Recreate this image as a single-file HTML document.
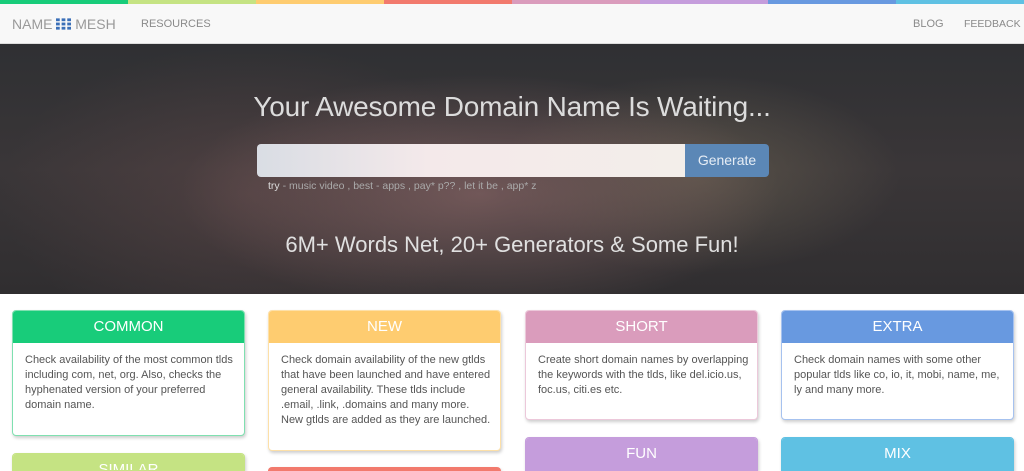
<!DOCTYPE html>
<html><head><style>
*{margin:0;padding:0;box-sizing:border-box}
html,body{width:1024px;height:471px;overflow:hidden}
body{background:#fff;font-family:"Liberation Sans",sans-serif;position:relative}
.strip{position:absolute;top:0;height:4px;width:128px}
.nav{position:absolute;top:4px;left:0;width:1024px;height:40px;background:#f8f8f8;border-bottom:1px solid #ddd;color:#8a8a8a}
.nav span{position:absolute;top:14px;font-size:11px}
.hero{position:absolute;top:44px;left:0;width:1024px;height:250px;overflow:hidden;
background:radial-gradient(ellipse 300px 120px at 480px 150px,rgba(150,110,110,.6),rgba(0,0,0,0)),
radial-gradient(ellipse 200px 100px at 700px 130px,rgba(120,110,90,.5),rgba(0,0,0,0)),
radial-gradient(ellipse 250px 150px at 250px 150px,rgba(110,80,80,.4),rgba(0,0,0,0)),
linear-gradient(180deg,#2f3033,#3a3638 50%,#302e30)}
.h1{position:absolute;top:47px;width:100%;text-align:center;color:#dcdcdc;font-size:28px;letter-spacing:-.2px}
.inp{position:absolute;left:257px;top:100px;width:428px;height:33px;border-radius:4px 0 0 4px;background:linear-gradient(90deg,#d9dde4,#f4e9ea 40%,#f3eeea)}
.btn{position:absolute;left:685px;top:100px;width:84px;height:33px;border-radius:0 4px 4px 0;background:#5b87b6;color:#e6edf5;font-size:14px;text-align:center;line-height:33px}
.tip{position:absolute;left:268px;top:136px;font-size:10.5px;color:#aaa}
.tip b{color:#ddd;font-weight:normal}
.h2{position:absolute;top:188px;width:100%;text-align:center;color:#e0e0e0;font-size:22px}
.card{position:absolute;width:233px;border-radius:4px;background:#fff;box-shadow:1px 2px 3px rgba(0,0,0,.2);border:1px solid;overflow:hidden}
.card .hd{height:33px;color:#fff;text-align:center;font-size:15px;line-height:33px;margin:-1px -1px 0;border-radius:4px 4px 0 0}
.card p{padding:10px 8px 10px 12px;font-size:11px;line-height:15px;color:#555}
</style></head><body>
<div class="strip" style="left:0;background:#18cc7a"></div>
<div class="strip" style="left:128px;background:#c5e383"></div>
<div class="strip" style="left:256px;background:#fecc70"></div>
<div class="strip" style="left:384px;background:#f27a6d"></div>
<div class="strip" style="left:512px;background:#da9cbc"></div>
<div class="strip" style="left:640px;background:#c59ddc"></div>
<div class="strip" style="left:768px;background:#6899e0"></div>
<div class="strip" style="left:896px;background:#5fc1e3"></div>
<div class="nav">
<span style="left:12px;top:12px;font-size:14px;color:#999">NAME <svg width="15" height="12" viewBox="0 0 16 12" style="vertical-align:-1px"><g fill="#3a6fb8"><rect x="0" y="0" width="4" height="3"/><rect x="6" y="0" width="4" height="3"/><rect x="12" y="0" width="4" height="3"/><rect x="0" y="4.5" width="4" height="3"/><rect x="6" y="4.5" width="4" height="3"/><rect x="12" y="4.5" width="4" height="3"/><rect x="0" y="9" width="4" height="3"/><rect x="6" y="9" width="4" height="3"/><rect x="12" y="9" width="4" height="3"/></g></svg> MESH</span>
<span style="left:141px">RESOURCES</span>
<span style="left:913px">BLOG</span>
<span style="left:964px;font-size:10.5px">FEEDBACK</span>
</div>
<div class="hero">
<div class="h1">Your Awesome Domain Name Is Waiting...</div>
<div class="inp"></div><div class="btn">Generate</div>
<div class="tip"><b>try</b> - music video , best - apps , pay* p?? , let it be , app* z</div>
<div class="h2">6M+ Words Net, 20+ Generators &amp; Some Fun!</div>
</div>
<div class="card" style="left:12px;top:310px;height:126px;border-color:#7fe0b0"><div class="hd" style="background:#18cc7a">COMMON</div><p>Check availability of the most common tlds including com, net, org. Also, checks the hyphenated version of your preferred domain name.</p></div>
<div class="card" style="left:268px;top:310px;height:141px;border-color:#fde0a8"><div class="hd" style="background:#fecc70">NEW</div><p>Check domain availability of the new gtlds that have been launched and have entered general availability. These tlds include .email, .link, .domains and many more. New gtlds are added as they are launched.</p></div>
<div class="card" style="left:525px;top:310px;height:110px;border-color:#ecc8da"><div class="hd" style="background:#da9cbc">SHORT</div><p>Create short domain names by overlapping the keywords with the tlds, like del.icio.us, foc.us, citi.es etc.</p></div>
<div class="card" style="left:781px;top:310px;height:110px;border-color:#a6c2ef"><div class="hd" style="background:#6899e0">EXTRA</div><p>Check domain names with some other popular tlds like co, io, it, mobi, name, me, ly and many more.</p></div>
<div class="card" style="left:12px;top:453px;height:18px;border-color:#c5e383;border-radius:4px 4px 0 0"><div class="hd" style="background:#c5e383">SIMILAR</div></div>
<div class="card" style="left:268px;top:467px;height:4px;border-color:#f27a6d;border-radius:4px 4px 0 0"><div class="hd" style="background:#f27a6d"></div></div>
<div class="card" style="left:525px;top:437px;height:34px;border-color:#c59ddc;border-radius:4px 4px 0 0"><div class="hd" style="background:#c59ddc">FUN</div></div>
<div class="card" style="left:781px;top:437px;height:34px;border-color:#5fc1e3;border-radius:4px 4px 0 0"><div class="hd" style="background:#5fc1e3">MIX</div></div>
</body></html>
